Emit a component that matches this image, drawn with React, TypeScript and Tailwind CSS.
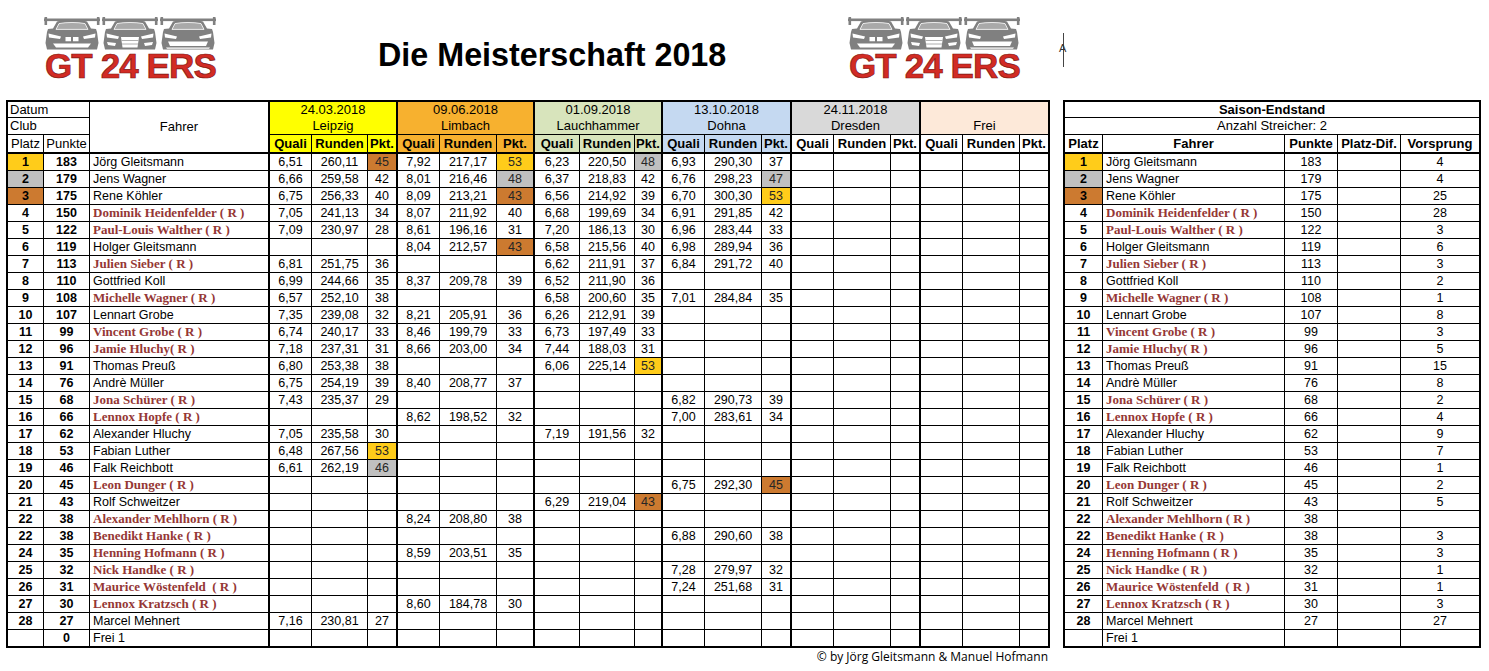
import React from "react";

type Medal = "g" | "s" | "b";
type Race = [string, string, string, Medal?] | null;
type Row = { platz: string; punkte: string; name: string; races: Race[] };

const medalBg: Record<Medal, string> = {
  g: "bg-[#ffcc1a]",
  s: "bg-[#c0c0c0]",
  b: "bg-[#cc7a30]",
};

const races = [
  { date: "24.03.2018", club: "Leipzig", head: "bg-[#ffff00]", sub: "bg-[#ffff00]" },
  { date: "09.06.2018", club: "Limbach", head: "bg-[#f7b12f]", sub: "bg-[#f7b12f]" },
  { date: "01.09.2018", club: "Lauchhammer", head: "bg-[#d8e4bc]", sub: "bg-[#d8e4bc]" },
  { date: "13.10.2018", club: "Dohna", head: "bg-[#c5d9f1]", sub: "bg-[#c5d9f1]" },
  { date: "24.11.2018", club: "Dresden", head: "bg-[#d9d9d9]", sub: "bg-white" },
  { date: "", club: "Frei", head: "bg-[#fde9d9]", sub: "bg-white" },
];

const _ = null;

const rows: Row[] = [
  { platz: "1", punkte: "183", name: "Jörg Gleitsmann", races: [["6,51", "260,11", "45", "b"], ["7,92", "217,17", "53", "g"], ["6,23", "220,50", "48", "s"], ["6,93", "290,30", "37"], _, _] },
  { platz: "2", punkte: "179", name: "Jens Wagner", races: [["6,66", "259,58", "42"], ["8,01", "216,46", "48", "s"], ["6,37", "218,83", "42"], ["6,76", "298,23", "47", "s"], _, _] },
  { platz: "3", punkte: "175", name: "Rene Köhler", races: [["6,75", "256,33", "40"], ["8,09", "213,21", "43", "b"], ["6,56", "214,92", "39"], ["6,70", "300,30", "53", "g"], _, _] },
  { platz: "4", punkte: "150", name: "Dominik Heidenfelder ( R )", races: [["7,05", "241,13", "34"], ["8,07", "211,92", "40"], ["6,68", "199,69", "34"], ["6,91", "291,85", "42"], _, _] },
  { platz: "5", punkte: "122", name: "Paul-Louis Walther ( R )", races: [["7,09", "230,97", "28"], ["8,61", "196,16", "31"], ["7,20", "186,13", "30"], ["6,96", "283,44", "33"], _, _] },
  { platz: "6", punkte: "119", name: "Holger Gleitsmann", races: [_, ["8,04", "212,57", "43", "b"], ["6,58", "215,56", "40"], ["6,98", "289,94", "36"], _, _] },
  { platz: "7", punkte: "113", name: "Julien Sieber ( R )", races: [["6,81", "251,75", "36"], _, ["6,62", "211,91", "37"], ["6,84", "291,72", "40"], _, _] },
  { platz: "8", punkte: "110", name: "Gottfried Koll", races: [["6,99", "244,66", "35"], ["8,37", "209,78", "39"], ["6,52", "211,90", "36"], _, _, _] },
  { platz: "9", punkte: "108", name: "Michelle Wagner ( R )", races: [["6,57", "252,10", "38"], _, ["6,58", "200,60", "35"], ["7,01", "284,84", "35"], _, _] },
  { platz: "10", punkte: "107", name: "Lennart Grobe", races: [["7,35", "239,08", "32"], ["8,21", "205,91", "36"], ["6,26", "212,91", "39"], _, _, _] },
  { platz: "11", punkte: "99", name: "Vincent Grobe ( R )", races: [["6,74", "240,17", "33"], ["8,46", "199,79", "33"], ["6,73", "197,49", "33"], _, _, _] },
  { platz: "12", punkte: "96", name: "Jamie Hluchy( R )", races: [["7,18", "237,31", "31"], ["8,66", "203,00", "34"], ["7,44", "188,03", "31"], _, _, _] },
  { platz: "13", punkte: "91", name: "Thomas Preuß", races: [["6,80", "253,38", "38"], _, ["6,06", "225,14", "53", "g"], _, _, _] },
  { platz: "14", punkte: "76", name: "Andrè Müller", races: [["6,75", "254,19", "39"], ["8,40", "208,77", "37"], _, _, _, _] },
  { platz: "15", punkte: "68", name: "Jona Schürer ( R )", races: [["7,43", "235,37", "29"], _, _, ["6,82", "290,73", "39"], _, _] },
  { platz: "16", punkte: "66", name: "Lennox Hopfe ( R )", races: [_, ["8,62", "198,52", "32"], _, ["7,00", "283,61", "34"], _, _] },
  { platz: "17", punkte: "62", name: "Alexander Hluchy", races: [["7,05", "235,58", "30"], _, ["7,19", "191,56", "32"], _, _, _] },
  { platz: "18", punkte: "53", name: "Fabian Luther", races: [["6,48", "267,56", "53", "g"], _, _, _, _, _] },
  { platz: "19", punkte: "46", name: "Falk Reichbott", races: [["6,61", "262,19", "46", "s"], _, _, _, _, _] },
  { platz: "20", punkte: "45", name: "Leon Dunger ( R )", races: [_, _, _, ["6,75", "292,30", "45", "b"], _, _] },
  { platz: "21", punkte: "43", name: "Rolf Schweitzer", races: [_, _, ["6,29", "219,04", "43", "b"], _, _, _] },
  { platz: "22", punkte: "38", name: "Alexander Mehlhorn ( R )", races: [_, ["8,24", "208,80", "38"], _, _, _, _] },
  { platz: "22", punkte: "38", name: "Benedikt Hanke ( R )", races: [_, _, _, ["6,88", "290,60", "38"], _, _] },
  { platz: "24", punkte: "35", name: "Henning Hofmann ( R )", races: [_, ["8,59", "203,51", "35"], _, _, _, _] },
  { platz: "25", punkte: "32", name: "Nick Handke ( R )", races: [_, _, _, ["7,28", "279,97", "32"], _, _] },
  { platz: "26", punkte: "31", name: "Maurice Wöstenfeld  ( R )", races: [_, _, _, ["7,24", "251,68", "31"], _, _] },
  { platz: "27", punkte: "30", name: "Lennox Kratzsch ( R )", races: [_, ["8,60", "184,78", "30"], _, _, _, _] },
  { platz: "28", punkte: "27", name: "Marcel Mehnert", races: [["7,16", "230,81", "27"], _, _, _, _, _] },
  { platz: "", punkte: "0", name: "Frei 1", races: [_, _, _, _, _, _] },
];

const vorsprung = ["4", "4", "25", "28", "3", "6", "3", "2", "1", "8", "3", "5", "15", "8", "2", "4", "9", "7", "1", "2", "5", "", "3", "3", "1", "1", "3", "27", ""];

const isRookie = (name: string) => name.includes("R )");

function platzBg(p: string) {
  if (p === "1") return medalBg.g;
  if (p === "2") return medalBg.s;
  if (p === "3") return medalBg.b;
  return "";
}

function raceBorder(i: number, j: number) {
  if (j < 2) return "border-r";
  return i < 5 ? "border-r-2" : "";
}

function Name({ name }: { name: string }) {
  if (isRookie(name)) {
    return (
      <span className="font-['Liberation_Serif',serif] font-bold text-[13px] text-[#953735] whitespace-pre">{name}</span>
    );
  }
  return <span className="whitespace-pre">{name}</span>;
}

function Car({ variant }: { variant: number }) {
  return (
    <svg width="56" height="33" viewBox="0 0 56 33">
      <g fill="#808080">
        <rect x="0" y="1.5" width="56" height="2.6" />
        <rect x="0.5" y="0" width="2.6" height="8" />
        <rect x="52.9" y="0" width="2.6" height="8" />
        <path d="M13 4.5 C20 2.6 36 2.6 43 4.5 L47 11.5 L52 12 L53 15 L54.5 26 L53 32.5 L3 32.5 L1.5 26 L3 15 L4 12 L9 11.5 Z" />
      </g>
      <path d="M15 6.6 C22 5.1 34 5.1 41 6.6 L44 12.4 L12 12.4 Z" fill="#a9a9a9" stroke="#ffffff" strokeWidth="0.8" />
      <path d="M4.5 16.5 L17 19.5 L16 22 L5 20.5 Z" fill="#ffffff" />
      <path d="M51.5 16.5 L39 19.5 L40 22 L51 20.5 Z" fill="#ffffff" />
      {variant === 0 && (
        <g fill="#ffffff">
          <path d="M21.5 20 h5.5 v4.2 h-5.5 Z M29 20 h5.5 v4.2 h-5.5 Z" />
          <path d="M9 26.5 L47 26.5 L44 30.5 L12 30.5 Z" />
        </g>
      )}
      {variant === 1 && (
        <g>
          <path d="M19 20 L37 20 L35.5 30.5 L20.5 30.5 Z" fill="#ffffff" />
          <path d="M19.5 23.5 H36.5 M20 27 H36" stroke="#9a9a9a" strokeWidth="0.8" />
          <path d="M5 25 L14 26 L13 29 L6 28 Z M51 25 L42 26 L43 29 L50 28 Z" fill="#ffffff" />
        </g>
      )}
      {variant === 2 && (
        <g fill="#ffffff">
          <path d="M8 24.5 L48 24.5 L46 29 L10 29 Z" />
          <path d="M6 30.5 L50 30.5 L49 31.8 L7 31.8 Z" />
        </g>
      )}
    </svg>
  );
}

function Logo() {
  return (
    <div className="flex flex-col items-start w-[174px]">
      <div className="flex gap-[2px] pl-[1px]">
        <Car variant={0} />
        <Car variant={1} />
        <Car variant={2} />
      </div>
      <div className="-mt-[2px] pl-[2px] text-[35px] leading-none font-bold tracking-[-0.9px] text-[#d22b24] [-webkit-text-stroke:0.7px_#7d1712]">
        GT 24 ERS
      </div>
    </div>
  );
}

const cell = "flex items-center justify-center border-black overflow-hidden whitespace-nowrap";
const rowsTpl = "grid-rows-[16px_17px_19px_repeat(28,17px)_16px]";

function LeftTable() {
  return (
    <div className={`grid w-[1044px] grid-cols-[36px_46px_180px_42px_56px_30px_42px_57px_38px_45px_55px_28px_42px_57px_30px_42px_57px_30px_42px_57px_28px] ${rowsTpl} border-2 border-black text-[12.5px]`}>
      <div className={`${cell} col-span-2 justify-start border-r border-b pl-[2px] text-[13px]`}>Datum</div>
      <div className={`${cell} row-span-3 border-r-2 border-b-2 text-[13px]`}>Fahrer</div>
      {races.map((r, i) => (
        <div key={`d${i}`} className={`${cell} col-span-3 text-[13px] ${r.head} ${i < 5 ? "border-r-2" : ""}`}>
          {r.date}
        </div>
      ))}
      <div className={`${cell} col-span-2 justify-start border-r border-b pl-[2px] text-[13px]`}>Club</div>
      {races.map((r, i) => (
        <div key={`c${i}`} className={`${cell} col-span-3 border-b text-[13px] ${r.head} ${i < 5 ? "border-r-2" : ""}`}>
          {r.club}
        </div>
      ))}
      <div className={`${cell} border-r border-b-2 text-[13px]`}>Platz</div>
      <div className={`${cell} border-r border-b-2 text-[13px]`}>Punkte</div>
      {races.map((r, i) =>
        ["Quali", "Runden", "Pkt."].map((h, j) => (
          <div key={`h${i}${j}`} className={`${cell} border-b-2 text-[13px] font-bold ${r.sub} ${raceBorder(i, j)}`}>
            {h}
          </div>
        ))
      )}
      {rows.map((row, ri) => {
        const last = ri === rows.length - 1;
        const bb = last ? "" : "border-b";
        return (
          <React.Fragment key={ri}>
            <div className={`${cell} border-r font-bold ${bb} ${platzBg(row.platz)}`}>{row.platz}</div>
            <div className={`${cell} border-r font-bold ${bb}`}>{row.punkte}</div>
            <div className={`${cell} justify-start border-r-2 pl-[3px] ${bb}`}>
              <Name name={row.name} />
            </div>
            {row.races.map((race, i) =>
              [0, 1, 2].map((j) => (
                <div
                  key={`${i}${j}`}
                  className={`${cell} ${bb} ${raceBorder(i, j)} ${j === 2 && race && race[3] ? `${medalBg[race[3]]} text-[#262626]` : ""}`}
                >
                  {race ? race[j] : ""}
                </div>
              ))
            )}
          </React.Fragment>
        );
      })}
    </div>
  );
}

function RightTable() {
  return (
    <div className={`grid w-[418px] grid-cols-[38px_182px_53px_63px_78px] ${rowsTpl} border-2 border-black text-[12.5px]`}>
      <div className={`${cell} col-span-5 border-b text-[13px] font-bold`}>Saison-Endstand</div>
      <div className={`${cell} col-span-5 border-b text-[13px]`}>Anzahl Streicher: 2</div>
      <div className={`${cell} border-r border-b-2 text-[13px] font-bold`}>Platz</div>
      <div className={`${cell} border-r border-b-2 text-[13px] font-bold`}>Fahrer</div>
      <div className={`${cell} border-r border-b-2 text-[13px] font-bold`}>Punkte</div>
      <div className={`${cell} border-r border-b-2 text-[13px] font-bold`}>Platz-Dif.</div>
      <div className={`${cell} border-b-2 text-[13px] font-bold`}>Vorsprung</div>
      {rows.map((row, ri) => {
        const last = ri === rows.length - 1;
        const bb = last ? "" : "border-b";
        return (
          <React.Fragment key={ri}>
            <div className={`${cell} border-r font-bold ${bb} ${platzBg(row.platz)}`}>{row.platz}</div>
            <div className={`${cell} justify-start border-r pl-[3px] ${bb}`}>
              <Name name={row.name} />
            </div>
            <div className={`${cell} border-r ${bb}`}>{row.punkte === "0" ? "" : row.punkte}</div>
            <div className={`${cell} border-r ${bb}`}></div>
            <div className={`${cell} ${bb}`}>{vorsprung[ri]}</div>
          </React.Fragment>
        );
      })}
    </div>
  );
}

export default function App() {
  return (
    <div className="w-[1489px] h-[671px] overflow-hidden bg-white text-black font-['Liberation_Sans',Arial,sans-serif]">
      <div className="flex h-[100px] items-start">
        <div className="w-[378px] pl-[43px] pt-[17px]">
          <Logo />
        </div>
        <div className="w-[469px] pt-[39px]">
          <h1 className="text-[32.3px] leading-none font-bold">Die Meisterschaft 2018</h1>
        </div>
        <div className="w-[213px] pt-[17px]">
          <Logo />
        </div>
        <div className="relative -ml-[1px] mt-[33px] h-[34px] w-[10px]">
          <div className="ml-[4px] h-full w-px bg-[#444]" />
          <span className="absolute left-0 top-[10px] text-[11px] leading-none text-[#333]">A</span>
        </div>
      </div>
      <div className="flex items-start gap-[13px] pl-[6px]">
        <div className="flex flex-col">
          <LeftTable />
          <p className="mt-[2px] pr-[2px] text-right text-[12px] leading-[14px] font-['Open_Sans',sans-serif]">
            © by Jörg Gleitsmann &amp; Manuel Hofmann
          </p>
        </div>
        <RightTable />
      </div>
    </div>
  );
}
